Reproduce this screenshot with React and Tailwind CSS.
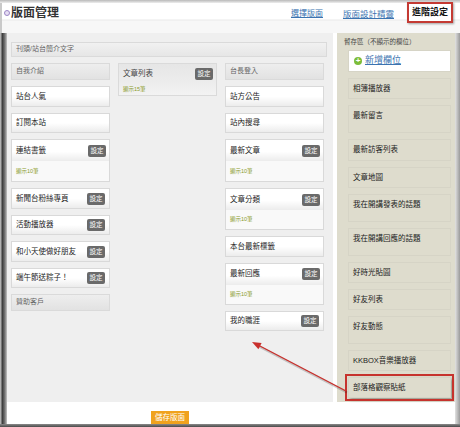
import React from 'react';

const FONT = { fontFamily: '"Liberation Sans", "Noto Sans CJK TC", sans-serif' };

const SetBtn = () => (
    <span className="ml-auto w-[18px] h-[12px] rounded-[2px] bg-[#6a6a6a] text-white text-[6.5px] leading-[12px] text-center shrink-0">設定</span>
);

// plain white block (optionally taller)
const Block = ({ label, h = 'h-[20.5px]', children, className = '' }) => (
    <div className={`${h} border border-[#d9d9d9] bg-[linear-gradient(#ffffff_0%,#ffffff_50%,#ececec_100%)] ${className}`}>
        <div className="h-[19px] flex items-center px-[4px] text-[7.5px] text-[#222] whitespace-nowrap">
            {label}
            {children}
        </div>
    </div>
);

// block with 設定 button and green note below
const SetBlock = ({ label, note = '顯示10筆', h = 'h-[43px]' }) => (
    <div className={`${h} border border-[#d9d9d9] bg-[#f9f9f9] flex flex-col`}>
        <div className="h-[21px] flex items-center px-[4px] pr-[3px] text-[7.5px] text-[#222] bg-[linear-gradient(#ffffff_0%,#ffffff_55%,#ececec_100%)]">
            {label}
            <SetBtn />
        </div>
        <div className="flex-1 flex items-center px-[4px] text-[5.5px] text-[#8a9a2b]">{note}</div>
    </div>
);

const Head = ({ label }) => (
    <div className="h-[17px] border border-[#dadada] bg-[linear-gradient(#eeeeee,#e2e2e2)] flex items-center px-[4px] text-[7px] text-[#666]">
        {label}
    </div>
);

const SimpleBtn = ({ label }) => (
    <Block label={label}>
        <SetBtn />
    </Block>
);

const PanelCard = ({ label, h, tall, className = '' }) => (
    <div className={`${h} border border-[#d6d4c6] bg-[linear-gradient(#ffffff_0%,#ffffff_${tall ? '60' : '50'}%,#ededed_100%)] ${className}`}>
        <div className={`${tall ? 'h-[20px]' : 'h-full'} flex items-center px-[4px] text-[7.5px] text-[#222] whitespace-nowrap`}>{label}</div>
    </div>
);

export default function App() {
    return (
        <div className="relative w-[460px] h-[427px] overflow-hidden bg-white flex flex-col" style={FONT}>
            {/* top edge */}
            <div className="h-[3px] bg-[linear-gradient(#b9b9b9,#eeeeee)]" />

            {/* header */}
            <div className="h-[30px] flex items-start bg-[linear-gradient(#ffffff_0px,#ffffff_16px,#e9e9e9_17px,#f7f7f7_18px,#f7f7f7_30px)] border-l-[2px] border-[#c9c9c9]">
                <div className="ml-[2px] mt-[3px] flex items-center gap-[1px]">
                    <span className="w-[6px] h-[6px] rounded-full border border-[#9c86c6] bg-[#e6def3]" />
                    <span className="text-[12px] leading-[14px] font-bold text-[#333]">版面管理</span>
                </div>
                <div className="ml-auto flex items-start">
                    <span className="mt-[5px] text-[8px] text-[#3b73b0] underline">選擇版面</span>
                    <span className="mt-[5px] ml-[20px] text-[8.5px] text-[#3b73b0] underline">版面設計精靈</span>
                    <div className="ml-[13px] -mt-[1px] w-[46px] h-[21px] border-2 border-[#c43a33] bg-white shadow-[1px_1px_2px_rgba(0,0,0,0.35)] flex items-center justify-center text-[9px] font-bold text-[#111]">
                        進階設定
                    </div>
                    <div className="w-[7px]" />
                </div>
            </div>

            {/* main */}
            <div className="h-[369px] flex">
                <div className="w-[7px] bg-[linear-gradient(to_right,#cfcfcf,#3e3e3e_35%,#777777_70%,#c4c4c4)]" />
                <div className="w-[326px] bg-[#efefef] pl-[4px] pt-[9px]">
                    <div className="w-[316px] h-[15px] border border-[#dadada] bg-[linear-gradient(#f1f1f1,#e6e6e6)] flex items-center px-[4px] text-[7px] text-[#666]">
                        刊頭/站台簡介文字
                    </div>
                    <div className="mt-[6px] grid grid-cols-[99px_99px_99px] gap-x-[8px] items-start">
                        <div className="flex flex-col gap-[6px]">
                            <Head label="自我介紹" />
                            <Block label="站台人氣" />
                            <Block label="訂閱本站" />
                            <SetBlock label="連結書籤" />
                            <SimpleBtn label="新聞台粉絲專頁" />
                            <SimpleBtn label="活動播放器" />
                            <SimpleBtn label="和小天使做好朋友" />
                            <SimpleBtn label="端午節送粽子！" />
                            <Head label="贊助客戶" />
                        </div>
                        <div className="flex flex-col">
                            <div className="h-[33px] border border-[#dadada] bg-[linear-gradient(#e6e6e6,#ececec_55%,#f3f3f3)] flex flex-col">
                                <div className="h-[20px] flex items-center px-[4px] pr-[3px] text-[7.5px] text-[#444]">
                                    文章列表
                                    <SetBtn />
                                </div>
                                <div className="flex-1 flex items-center px-[4px] text-[5.5px] text-[#8a9a2b]">顯示15筆</div>
                            </div>
                        </div>
                        <div className="flex flex-col gap-[6px]">
                            <Head label="台長登入" />
                            <Block label="站方公告" />
                            <Block label="站內搜尋" />
                            <SetBlock label="最新文章" />
                            <SetBlock label="文章分類" h="h-[42px]" />
                            <Block label="本台最新標籤" />
                            <SetBlock label="最新回應" h="h-[42px]" />
                            <SimpleBtn label="我的職涯" />
                        </div>
                    </div>
                </div>
                <div className="w-[4px]" />
                <div className="w-[118px] bg-[#dedccd] pl-[11px] pr-[4px] pt-[5px]">
                    <div className="h-[12px] text-[6.5px] leading-[8px] text-[#444] -ml-[4px] whitespace-nowrap">暫存區（不顯示的欄位）</div>
                    <div className="flex flex-col gap-[6px]">
                        <div className="h-[22px] border border-[#d6d4c6] bg-white flex items-center px-[5px] gap-[3px]">
                            <span className="w-[8px] h-[8px] rounded-full bg-[#7cbd3a] text-white text-[8px] leading-[8px] text-center font-bold">+</span>
                            <span className="text-[9px] text-[#3b73b0] underline">新增欄位</span>
                        </div>
                        <PanelCard label="相簿播放器" h="h-[21px]" />
                        <PanelCard label="最新留言" h="h-[28px]" tall />
                        <PanelCard label="最新訪客列表" h="h-[22px]" />
                        <PanelCard label="文章地圖" h="h-[21px]" />
                        <PanelCard label="我在開講發表的話題" h="h-[28px]" tall />
                        <PanelCard label="我在開講回應的話題" h="h-[28px]" tall />
                        <PanelCard label="好時光貼圖" h="h-[21px]" />
                        <PanelCard label="好友列表" h="h-[21px]" />
                        <PanelCard label="好友動態" h="h-[28px]" tall />
                        <PanelCard label="KKBOX音樂播放器" h="h-[21px]" />
                        <PanelCard
                            label="部落格觀察貼紙"
                            h="h-[21px]"
                            className="outline-2 outline-[#c6332d] outline-offset-[1px] shadow-[2px_2px_3px_rgba(0,0,0,0.3)]"
                        />
                    </div>
                </div>
                <div className="w-[5px] bg-[linear-gradient(to_right,#e2e2e2,#9a9a9a)]" />
            </div>

            {/* footer */}
            <div className="h-[22px] flex overflow-hidden">
                <div className="w-[7px] bg-[linear-gradient(to_right,#cfcfcf,#3e3e3e_35%,#777777_70%,#c4c4c4)]" />
                <div className="w-[326px] flex justify-center pt-[9px]">
                    <span className="w-[38px] h-[15px] bg-[#f0a21e] text-white text-[7.5px] leading-[14px] text-center">儲存版面</span>
                </div>
                <div className="flex-1" />
                <div className="w-[5px] bg-[linear-gradient(to_right,#e2e2e2,#9a9a9a)]" />
            </div>

            {/* bottom edge */}
            <div className="h-[3px] bg-[linear-gradient(#8a8a8a,#4a4a4a)]" />

            {/* annotation arrow */}
            <svg className="absolute inset-0 pointer-events-none" width="460" height="427" viewBox="0 0 460 427">
                <line x1="346" y1="391" x2="258" y2="345" stroke="rgba(0,0,0,0.18)" strokeWidth="2" transform="translate(1,1.5)" />
                <line x1="346" y1="391" x2="258" y2="345" stroke="#c9302c" strokeWidth="1.4" />
                <polygon points="252,342 261.6,343.1 258.4,349.3" fill="#c9302c" />
            </svg>
        </div>
    );
}
